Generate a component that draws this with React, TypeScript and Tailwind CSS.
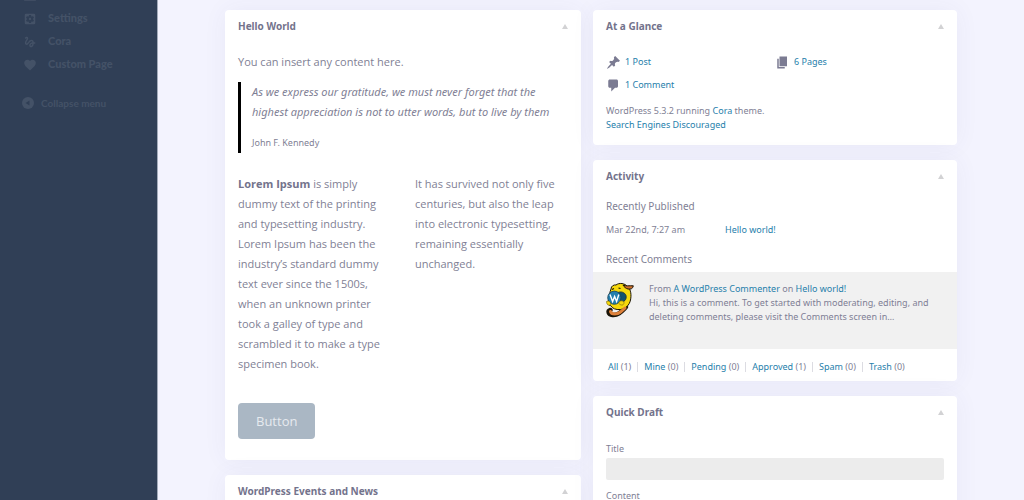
import type { ReactNode } from "react";
import { MdFavorite, MdGesture, MdHomeRepairService, MdSettingsApplications } from "react-icons/md";

const menu = [
  { label: "Tools", icon: MdHomeRepairService },
  { label: "Settings", icon: MdSettingsApplications },
  { label: "Cora", icon: MdGesture },
  { label: "Custom Page", icon: MdFavorite },
];

const filters = [
  { label: "All", count: 1 },
  { label: "Mine", count: 0 },
  { label: "Pending", count: 0 },
  { label: "Approved", count: 1 },
  { label: "Spam", count: 0 },
  { label: "Trash", count: 0 },
];

function Dashicon({ d }: { d: string }) {
  return (
    <svg viewBox="0 0 20 20" className="size-[15px] shrink-0 fill-[#7b7b92]" aria-hidden="true">
      <path d={d} />
    </svg>
  );
}

const PIN =
  "M10.44 3.02l1.82-1.82 6.36 6.35-1.83 1.82c-1.05-.68-2.48-.57-3.41.36l-.75.75c-.92.93-1.04 2.35-.35 3.41l-1.83 1.82-2.41-2.41-2.8 2.79c-.42.42-3.38 2.71-3.8 2.29s1.86-3.39 2.28-3.81l2.79-2.79L4.1 9.36l1.83-1.82c1.05.69 2.48.57 3.4-.36l.75-.75c.93-.92 1.05-2.35.36-3.41z";
const PAGES = "M6 15V2h10v13H6zm-1 1h8v2H3V5h2v11z";
const COMMENT =
  "M5 2h9c1.1 0 2 .9 2 2v7c0 1.1-.9 2-2 2h-2l-5 5v-5H5c-1.1 0-2-.9-2-2V4c0-1.1.9-2 2-2z";

function Link({ children }: { children: ReactNode }) {
  return (
    <a href="#" className="text-[#2680ab]">
      {children}
    </a>
  );
}

function Card({ title, children }: { title: string; children?: ReactNode }) {
  return (
    <section className="rounded bg-white shadow-[0_0_24px_rgba(70,60,130,0.06)]">
      <header className="flex h-8 items-center justify-between px-[13px]">
        <h2 className="text-[10px] font-bold text-[#73738c]">{title}</h2>
        <button type="button" aria-label={`Toggle panel: ${title}`}>
          <svg viewBox="0 0 6 5" className="h-[5px] w-[6px] fill-[#d2d2d4]">
            <path d="M3 0l3 5H0z" />
          </svg>
        </button>
      </header>
      {children}
    </section>
  );
}

function Avatar() {
  return (
    <svg viewBox="0 0 36 36" className="size-9 shrink-0" role="img" aria-label="Wapuu">
      <path d="M7.500 28c-3 1-2.500 4.500 2 5 6 .5 9-3.500 13.500-8" fill="none" stroke="#1a1408" strokeWidth="4.500" strokeLinecap="round" />
      <path
        d="M8 7c0-3 3-4.500 5-4 3-2.500 9-2 12 2 3 3 3.500 8 2.500 13-1 5-5 9-10 9.500-5 .5-8-1-10-4-3 0-4-4-1-6 0-4 0-7 1.500-10.500z"
        fill="#f6d80c"
        stroke="#1a1408"
        strokeWidth="1"
      />
      <path d="M20 3c3 1.500 6 .5 10.300.8-.3 2.700-2.300 3.700-5.300 3.200-2-.5-4-2-5-4z" fill="#cf702b" stroke="#1a1408" strokeWidth="1" />
      <path d="M15 10.500c3-1.500 7 0 8 3 1 4-2 7-5 6z" fill="#12516f" stroke="#182b31" strokeWidth=".8" />
      <circle cx="11.300" cy="15.700" r="6.600" fill="#237fae" stroke="#174055" strokeWidth=".8" />
      <path d="M7 12.500l2.600 7 2-5 2 5 2.200-7" fill="none" stroke="#fff" strokeWidth="1.400" />
      <path d="M3.500 19.500c2-1.500 4.500.5 4 3-1.500 1.500-4 .5-4-3zM15.500 21c1-2.500 4.500-3 5.500-.5 0 2.500-2.500 4-5.500.5z" fill="#f6d80c" stroke="#705f12" strokeWidth=".6" />
      <path d="M7.500 29.500c1 3.500 7 3 10 .5 2-1.500 3-2.500 4.500-4" fill="none" stroke="#de813b" strokeWidth="3" strokeLinecap="round" />
      <path d="M9 7.500l2-1M15.500 6l2 .5" stroke="#1a1408" strokeWidth="1.100" />
    </svg>
  );
}

export default function App() {
  return (
    <div className="flex h-screen overflow-hidden bg-[#f3f3fe] font-['Noto_Sans','Open_Sans',sans-serif] text-[#7f7f95]">
      <nav className="w-[158px] shrink-0 overflow-hidden border-r border-[#a3abba] bg-[#303f56] font-['Lato',sans-serif] text-[#445267]">
        <ul className="-mt-4 pl-[23px]">
          {menu.map(({ label, icon: Icon }) => (
            <li key={label}>
              <a href="#" className="flex h-[23px] items-center gap-[11px] text-[11px] font-black">
                <Icon className="size-[14px]" aria-hidden="true" />
                {label}
              </a>
            </li>
          ))}
        </ul>
        <button type="button" className="mt-[15px] flex h-6 items-center gap-[7px] pl-[22px] text-[10px] font-bold">
          <svg viewBox="0 0 12 12" className="size-[12px]" aria-hidden="true">
            <circle cx="6" cy="6" r="6" fill="currentColor" />
            <path d="M7.500 3.500v5L3.500 6z" fill="#303f56" />
          </svg>
          Collapse menu
        </button>
      </nav>

      <main className="grid flex-1 grid-cols-[356fr_364fr] items-start gap-3 px-[67px] pt-[10px]">
        <div className="flex flex-col gap-[15px]">
          <Card title="Hello World">
            <div className="px-[13px] pt-[10px] pb-[21px] font-['Open_Sans',sans-serif] text-[11px] leading-5">
              <p>You can insert any content here.</p>
              <blockquote className="mt-[10px] border-l-3 border-black pl-[11px] font-['Noto_Sans',sans-serif]">
                <p className="italic">
                  As we express our gratitude, we must never forget that the highest appreciation is not to utter words,
                  but to live by them
                </p>
                <cite className="mt-[11px] block text-[9px] not-italic">John F. Kennedy</cite>
              </blockquote>
              <div className="mt-[21px] grid grid-cols-2 gap-6">
                <p>
                  <strong className="text-[#73738c]">Lorem Ipsum</strong> is simply dummy text of the printing and
                  typesetting industry. Lorem Ipsum has been the industry’s standard dummy text ever since the 1500s,
                  when an unknown printer took a galley of type and scrambled it to make a type specimen book.
                </p>
                <p>
                  It has survived not only five centuries, but also the leap into electronic typesetting, remaining
                  essentially unchanged.
                </p>
              </div>
              <button type="button" className="mt-[29px] block rounded bg-[#aab7c4] px-[18px] py-2 text-[13px] text-[#e6eaef]">
                Button
              </button>
            </div>
          </Card>
          <Card title="WordPress Events and News">
            <div className="h-40" />
          </Card>
        </div>

        <div className="flex flex-col gap-[15px]">
          <Card title="At a Glance">
            <div className="px-[13px] pt-[10px] pb-[13px] text-[9px] leading-[14px]">
              <ul className="grid grid-cols-2 gap-y-[3px] leading-5">
                <li className="flex items-center gap-1">
                  <Dashicon d={PIN} />
                  <Link>1 Post</Link>
                </li>
                <li className="flex items-center gap-1">
                  <Dashicon d={PAGES} />
                  <Link>6 Pages</Link>
                </li>
                <li className="flex items-center gap-1">
                  <Dashicon d={COMMENT} />
                  <Link>1 Comment</Link>
                </li>
              </ul>
              <p className="mt-[9px]">
                WordPress 5.3.2 running <Link>Cora</Link> theme.
              </p>
              <p>
                <Link>Search Engines Discouraged</Link>
              </p>
            </div>
          </Card>

          <Card title="Activity">
            <div className="text-[9px] leading-[14px]">
              <div className="px-[13px] pt-[7px]">
                <h3 className="text-[10px] leading-[14px]">Recently Published</h3>
                <p className="mt-[10px] flex">
                  <span className="w-[119px]">Mar 22nd, 7:27 am</span>
                  <Link>Hello world!</Link>
                </p>
                <h3 className="mt-[15px] text-[10px] leading-[14px]">Recent Comments</h3>
              </div>
              <div className="mt-[6px] flex min-h-[77px] gap-[10px] bg-[#f1f1f1] pt-[10px] pr-[13px] pl-[10px]">
                <Avatar />
                <div className="min-w-0">
                  <p>
                    From <Link>A WordPress Commenter</Link> on <Link>Hello world!</Link>
                  </p>
                  <p>
                    Hi, this is a comment. To get started with moderating, editing, and deleting comments, please visit
                    the Comments screen in…
                  </p>
                </div>
              </div>
              <ul className="flex h-8 items-center pt-1 pl-[15px]">
                {filters.map(({ label, count }, i) => (
                  <li key={label} className="flex items-center">
                    {i > 0 && <span className="mx-[6px] h-[10px] w-px bg-[#dcdce2]" />}
                    <span>
                      <Link>{label}</Link> ({count})
                    </span>
                  </li>
                ))}
              </ul>
            </div>
          </Card>

          <Card title="Quick Draft">
            <form className="px-[13px] pt-[13px] text-[9px] leading-4">
              <label htmlFor="title" className="block">
                Title
              </label>
              <input id="title" type="text" className="mt-[1px] block h-[22px] w-full rounded-xs bg-[#ececec] px-2" />
              <label htmlFor="content" className="mt-2 block">
                Content
              </label>
              <textarea id="content" className="mt-[1px] block h-16 w-full rounded-xs bg-[#ececec] px-2" />
            </form>
          </Card>
        </div>
      </main>
    </div>
  );
}
